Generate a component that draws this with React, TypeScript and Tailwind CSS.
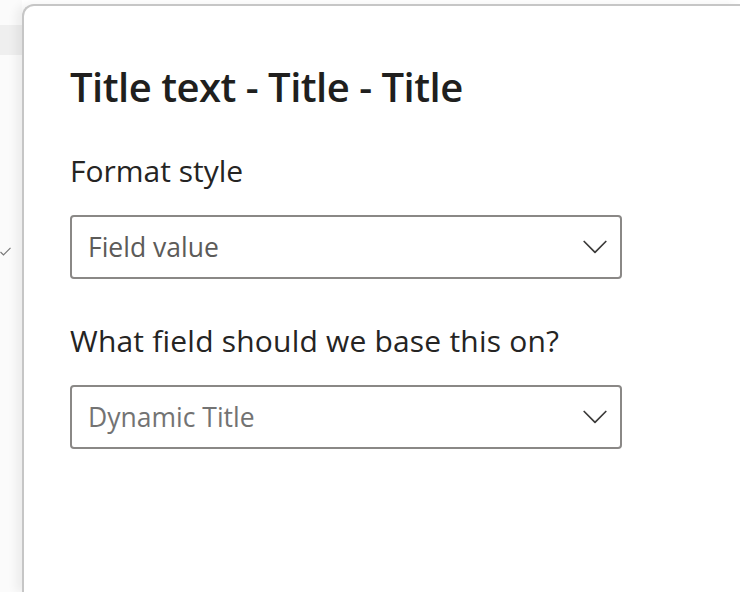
import React from "react";

function Chevron() {
  return (
    <svg width="24" height="14" viewBox="0 0 24 14" fill="none">
      <path d="M1.2 1.5 L12 12.3 L22.8 1.5" stroke="#3b3a39" strokeWidth="1.7" strokeLinecap="round" strokeLinejoin="round" />
    </svg>
  );
}

function Dropdown({ text, placeholder }: { text: string; placeholder?: boolean }) {
  return (
    <div className="flex h-[64px] w-[552px] items-center justify-between rounded-[4px] border-2 border-[#8a8886] pl-[16px] pr-[13px]">
      <span className={placeholder ? "text-[26.5px] leading-[36px] text-[#737373]" : "text-[26.5px] leading-[36px] text-[#5c5b59]"}>
        {text}
      </span>
      <Chevron />
    </div>
  );
}

export default function App() {
  return (
    <div
      className="relative flex h-[592px] w-[740px] overflow-hidden bg-white"
      style={{ fontFamily: '"Open Sans", "Noto Sans", sans-serif' }}
    >
      <div className="flex w-[22px] shrink-0 flex-col bg-[#fbfbfb]">
        <div className="mt-[25px] h-[30px] bg-[#efefef]" />
        <div className="mt-[192px] pl-[0px]">
          <svg width="11" height="9" viewBox="0 0 11 9" fill="none">
            <path d="M0.5 5 L3.5 8 L10.5 0.8" stroke="#7a7a7a" strokeWidth="1.2" />
          </svg>
        </div>
      </div>
      <div className="mt-[4px] flex flex-1 flex-col rounded-tl-[12px] border-l-2 border-t-2 border-[#c6c6c6] bg-white pl-[46px] pt-[57px] shadow-[-6px_0_10px_rgba(0,0,0,0.06)]">
        <h1 className="text-[40px] font-semibold leading-[48px] tracking-[-0.5px] text-[#201f1e]">
          Title text - Title - Title
        </h1>
        <div className="mt-[40px] text-[30px] leading-[40px] text-[#252423]">Format style</div>
        <div className="mt-[24px]">
          <Dropdown text="Field value" />
        </div>
        <div className="mt-[42px] text-[30px] leading-[40px] tracking-[0.2px] text-[#252423]">
          What field should we base this on?
        </div>
        <div className="mt-[24px]">
          <Dropdown text="Dynamic Title" placeholder />
        </div>
      </div>
    </div>
  );
}
